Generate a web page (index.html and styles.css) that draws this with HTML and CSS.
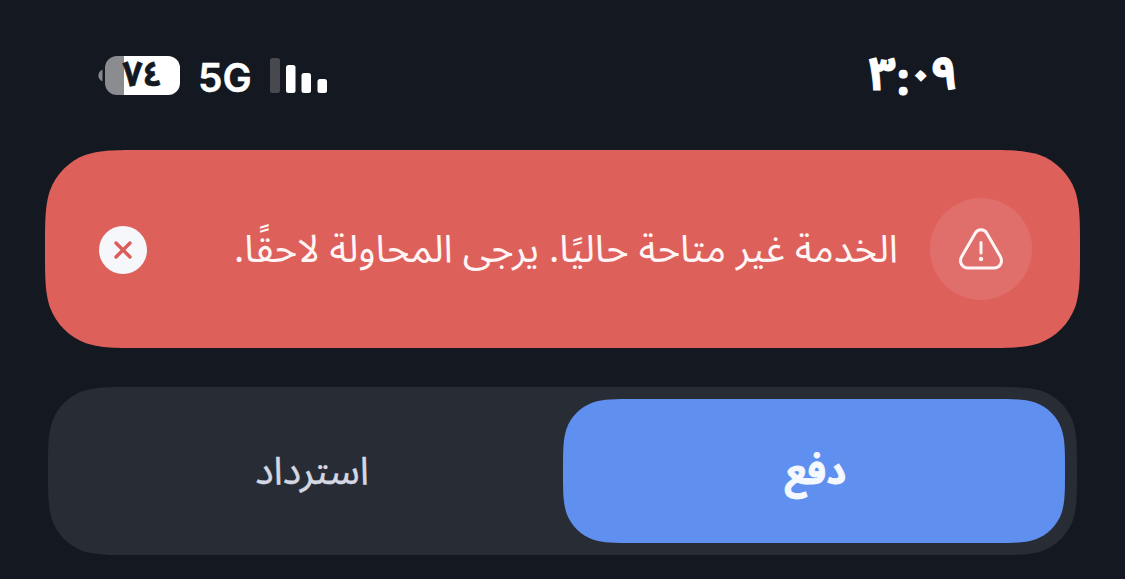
FILE: index.html
```
<!DOCTYPE html>
<html lang="ar" dir="rtl">
  <head>
    <meta charset="UTF-8" />
    <meta name="viewport" content="width=device-width, initial-scale=1.0" />
    <title>دفع</title>
    <link rel="stylesheet" href="styles.css">
  </head>
  <body>
    <header class="status">
      <div class="time"><span>٣</span><span class="colon">:</span><span class="zero">٠</span><span>٩</span></div>
      <div class="indicators">
        <svg class="signal" width="57" height="35" viewBox="0 0 57 35">
          <rect x="0" y="0" width="10" height="35" rx="2.5" fill="#47494f" />
          <rect x="16" y="7" width="9.5" height="28" rx="2.5" fill="#fff" />
          <rect x="31.5" y="15" width="9.5" height="20" rx="2.5" fill="#fff" />
          <rect x="47.5" y="21" width="9.5" height="14" rx="2.5" fill="#fff" />
        </svg>
        <span class="network">5G</span>
        <div class="battery">
          <div class="level"><span>٧٤</span></div>
          <svg width="5" height="13" viewBox="0 0 5 13">
            <path d="M4.500 0.500C-1 3 -1 10 4.500 12.500Z" fill="#84868a" />
          </svg>
        </div>
      </div>
    </header>

    <section class="alert">
      <div class="alertIcon">
        <svg width="46" height="44" viewBox="0 0 46 44" fill="none" stroke="#fff5f5" stroke-width="3" stroke-linecap="round" stroke-linejoin="round">
          <path d="M17.200 6.200C19.800 1.600 26.200 1.600 28.800 6.200L42.300 29.500C45.300 35 42 41 36 41H10C4 41 0.700 35 3.700 29.500Z" />
          <path d="M23 15.500V26" />
          <circle cx="23" cy="32" r="2.200" fill="#fff5f5" stroke="none" />
        </svg>
      </div>
      <p class="message"><span>الخدمة غير متاحة حاليًا. يرجى المحاولة لاحقًا.</span></p>
      <button class="close" type="button" aria-label="إغلاق">
        <svg width="18" height="18" viewBox="0 0 18 18" fill="none" stroke="#db5c58" stroke-width="3.400" stroke-linecap="round">
          <path d="M2 2L16 16M16 2L2 16" />
        </svg>
      </button>
    </section>

    <nav class="tabs">
      <button class="tab active" type="button"><span>دفع</span></button>
      <button class="tab" type="button"><span>استرداد</span></button>
    </nav>
  </body>
</html>
```
FILE: styles.css
```
* {
  box-sizing: border-box;
}
body {
  margin: 0;
  height: 579px;
  overflow: hidden;
  background-color: #141921;
  color: #fff;
  font-family: "Noto Sans Arabic", "DejaVu Sans", sans-serif;
}
button {
  border: none;
  padding: 0;
  font-family: inherit;
}
span {
  display: inline-block;
  white-space: nowrap;
}

.status {
  display: flex;
  justify-content: space-between;
  align-items: center;
  height: 150px;
  padding: 0 168px 0 98px;
}
.time {
  width: 88px;
  display: flex;
  direction: ltr;
  justify-content: center;
  align-items: center;
  font-size: 47px;
  font-weight: bold;
  -webkit-text-stroke: 1px #fff;
}
.colon {
  margin-top: 6px;
  font-family: Inter, sans-serif;
  font-size: 46px;
  line-height: 40px;
}
.zero {
  font-size: 34px;
  -webkit-text-stroke: 3px #fff;
}
.indicators {
  display: flex;
  align-items: center;
}
.network {
  margin: 6px 18px 0 18px;
  font-family: Inter, sans-serif;
  font-size: 39px;
  font-weight: 600;
  line-height: 40px;
  -webkit-text-stroke: 0.4px #fff;
}
.battery {
  display: flex;
  align-items: center;
  gap: 2px;
}
.level {
  width: 75px;
  height: 39px;
  border-radius: 12px;
  background: linear-gradient(to right, #8b8c90 19.5px, #fff 19.5px);
  color: #141921;
  display: flex;
  align-items: center;
  justify-content: center;
  font-size: 35px;
  font-weight: bold;
  -webkit-text-stroke: 0.6px #141921;
}

.alert {
  width: 1035px;
  height: 198px;
  margin: 0 45px;
  padding: 0 48px 0 54px;
  display: flex;
  align-items: center;
  background-color: #de605b;
  clip-path: path("M98.900 0H936.100C964.600 0 978.800 0 994.100 4.800C1010.900 10.900 1024.100 24.100 1030.200 40.900C1035 56.200 1035 70.400 1035 98.900C1035 127.600 1035 141.800 1030.200 157.100C1024.100 173.900 1010.900 187.100 994.100 193.200C978.800 198 964.600 198 936.100 198H98.900C70.400 198 56.200 198 40.900 193.200C24.100 187.100 10.900 173.900 4.800 157.100C0 141.800 0 127.600 0 98.900C0 70.400 0 56.200 4.800 40.900C10.900 24.100 24.100 10.900 40.900 4.800C56.200 0 70.400 0 98.900 0Z");
}
.alertIcon {
  width: 102px;
  height: 102px;
  border-radius: 50%;
  background-color: #e06f6b;
  display: flex;
  align-items: center;
  justify-content: center;
}
.message {
  flex: 1;
  margin: 0 32px 0 0;
  font-size: 38.5px;
  color: #fff5f5;
}
.close {
  width: 48px;
  height: 48px;
  margin-top: 2px;
  border-radius: 50%;
  background-color: #f5f7fb;
  display: flex;
  align-items: center;
  justify-content: center;
}

.tabs {
  width: 1029px;
  height: 168px;
  margin: 39px 48px 0;
  padding: 12px;
  display: flex;
  background-color: #282c34;
  clip-path: path("M84 0H945C969.100 0 981.200 0 994.300 4.100C1008.500 9.300 1019.700 20.500 1024.900 34.700C1029 47.800 1029 59.900 1029 84C1029 108.100 1029 120.200 1024.900 133.300C1019.700 147.500 1008.500 158.700 994.300 163.900C981.200 168 969.100 168 945 168H84C59.900 168 47.800 168 34.700 163.900C20.500 158.700 9.300 147.500 4.100 133.300C0 120.200 0 108.100 0 84C0 59.900 0 47.800 4.100 34.700C9.300 20.500 20.500 9.300 34.700 4.100C47.800 0 59.900 0 84 0Z");
}
.tab {
  width: 502px;
  height: 144px;
  background: none;
  color: #d3d8e3;
  font-size: 38.5px;
  -webkit-text-stroke: 0.4px #d3d8e3;
}
.active {
  padding-left: 3px;
  background-color: #5f90ef;
  color: #f5f8fe;
  font-size: 38.5px;
  font-weight: bold;
  -webkit-text-stroke: 0.8px #f5f8fe;
  clip-path: path("M71.800 0H430.200C450.800 0 461.200 0 472.300 3.500C484.500 7.900 494.100 17.500 498.500 29.700C502 40.800 502 51.200 502 72C502 92.800 502 103.200 498.500 114.300C494.100 126.500 484.500 136.100 472.300 140.500C461.200 144 450.800 144 430.200 144H71.800C51.200 144 40.800 144 29.700 140.500C17.500 136.100 7.900 126.500 3.500 114.300C0 103.200 0 92.800 0 72C0 51.200 0 40.800 3.500 29.700C7.900 17.500 17.500 7.900 29.700 3.500C40.800 0 51.200 0 71.800 0Z");
}
```
